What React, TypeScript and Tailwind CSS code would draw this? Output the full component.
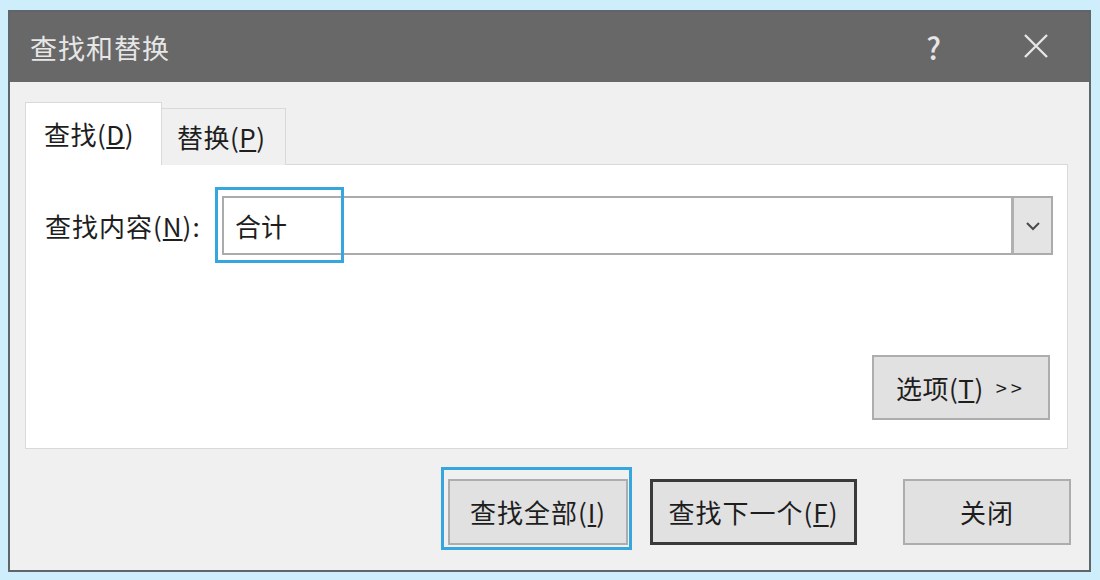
export default function App() {
  const font = { fontFamily: '"Noto Sans CJK SC", "Noto Sans", sans-serif' };
  return (
    <div className="w-[1100px] h-[580px] bg-[#cdeefa] pt-[10px] pl-[8px]" style={font}>
      <div className="w-[1083px] h-[562px] border-2 border-[#5f6569] flex flex-col bg-[#f0f0f0]">
        {/* Title bar */}
        <div className="h-[70px] bg-[#686868] flex items-center pl-[20px] pr-[40px] text-[#e6e6e6]">
          <span className="text-[27px] leading-none tracking-[1px]">查找和替换</span>
          <span className="ml-auto mr-[82px] text-[30px] leading-none font-medium">?</span>
          <svg width="26" height="26" viewBox="0 0 26 26" className="mt-[-2px]">
            <path d="M2 2 L24 24 M24 2 L2 24" stroke="#e6e6e6" strokeWidth="2.4" />
          </svg>
        </div>

        {/* Body */}
        <div className="flex-1 flex flex-col pl-[15px] pr-[21px] pt-[21px] text-[#1e1e1e]">
          {/* Tabs */}
          <div className="flex items-end h-[62px] relative z-10">
            <div className="w-[137px] h-[63px] bg-white border border-b-0 border-[#d9d9d9] flex items-center pl-[18px] text-[26px] tracking-[0.5px] leading-none">
              查找(<span className="underline underline-offset-2">D</span>)
            </div>
            <div className="w-[124px] h-[57px] bg-[#f0f0f0] border border-l-0 border-b-0 border-[#d9d9d9] flex items-center pl-[15px] text-[26px] tracking-[0.5px] leading-none">
              替换(<span className="underline underline-offset-2">P</span>)
            </div>
          </div>

          {/* Panel */}
          <div className="h-[285px] -mt-px bg-white border border-[#d9d9d9] flex flex-col pl-[19px] pr-[14px] pt-[31px] pb-[28px]">
            <div className="flex items-center">
              <span className="w-[177px] shrink-0 text-[26px] tracking-[1px] leading-none">
                查找内容(<span className="underline underline-offset-2">N</span>):
              </span>
              <div className="relative flex-1 h-[59px] border-2 border-[#ababab] flex bg-white">
                <div className="flex-1 flex items-center pl-[11px] text-[26px] leading-none">合计</div>
                <div className="w-[40px] bg-[#e4e4e4] border-l-[3px] border-[#b0b0b0] flex items-center justify-center">
                  <svg width="16" height="10" viewBox="0 0 16 10">
                    <path d="M2 2 L8 8 L14 2" fill="none" stroke="#4a4a4a" strokeWidth="2" />
                  </svg>
                </div>
                <div className="absolute -left-[9px] -top-[11px] w-[129px] h-[76px] border-[3px] border-[#35a7de]" />
              </div>
            </div>
            <div className="flex-1" />
            <div className="flex justify-end pr-[3px]">
              <button className="w-[178px] h-[65px] bg-[#e1e1e1] border-2 border-[#adadad] flex items-center justify-center gap-[12px] text-[26px] leading-none">
                <span className="tracking-[0.5px]">
                  选项(<span className="underline underline-offset-2">T</span>)
                </span>
                <span className="text-[20px] tracking-[4px]">&gt;&gt;</span>
              </button>
            </div>
          </div>

          {/* Bottom buttons */}
          <div className="flex justify-end items-start mt-[30px] -mr-[3px]">
            <div className="relative">
              <button className="w-[180px] h-[66px] bg-[#e1e1e1] border-2 border-[#adadad] flex items-center justify-center text-[26px] tracking-[1px] leading-none">
                查找全部(<span className="underline underline-offset-2">I</span>)
              </button>
              <div className="absolute -left-[7px] -top-[12px] w-[191px] h-[83px] border-[3px] border-[#35a7de]" />
            </div>
            <button className="ml-[22px] w-[207px] h-[66px] bg-[#e1e1e1] border-[3px] border-[#3a3a3a] flex items-center justify-center text-[26px] tracking-[1px] leading-none">
              查找下一个(<span className="underline underline-offset-2">F</span>)
            </button>
            <button className="ml-[46px] w-[168px] h-[66px] bg-[#e1e1e1] border-2 border-[#adadad] flex items-center justify-center text-[26px] tracking-[1px] leading-none">
              关闭
            </button>
          </div>
        </div>
      </div>
    </div>
  );
}
